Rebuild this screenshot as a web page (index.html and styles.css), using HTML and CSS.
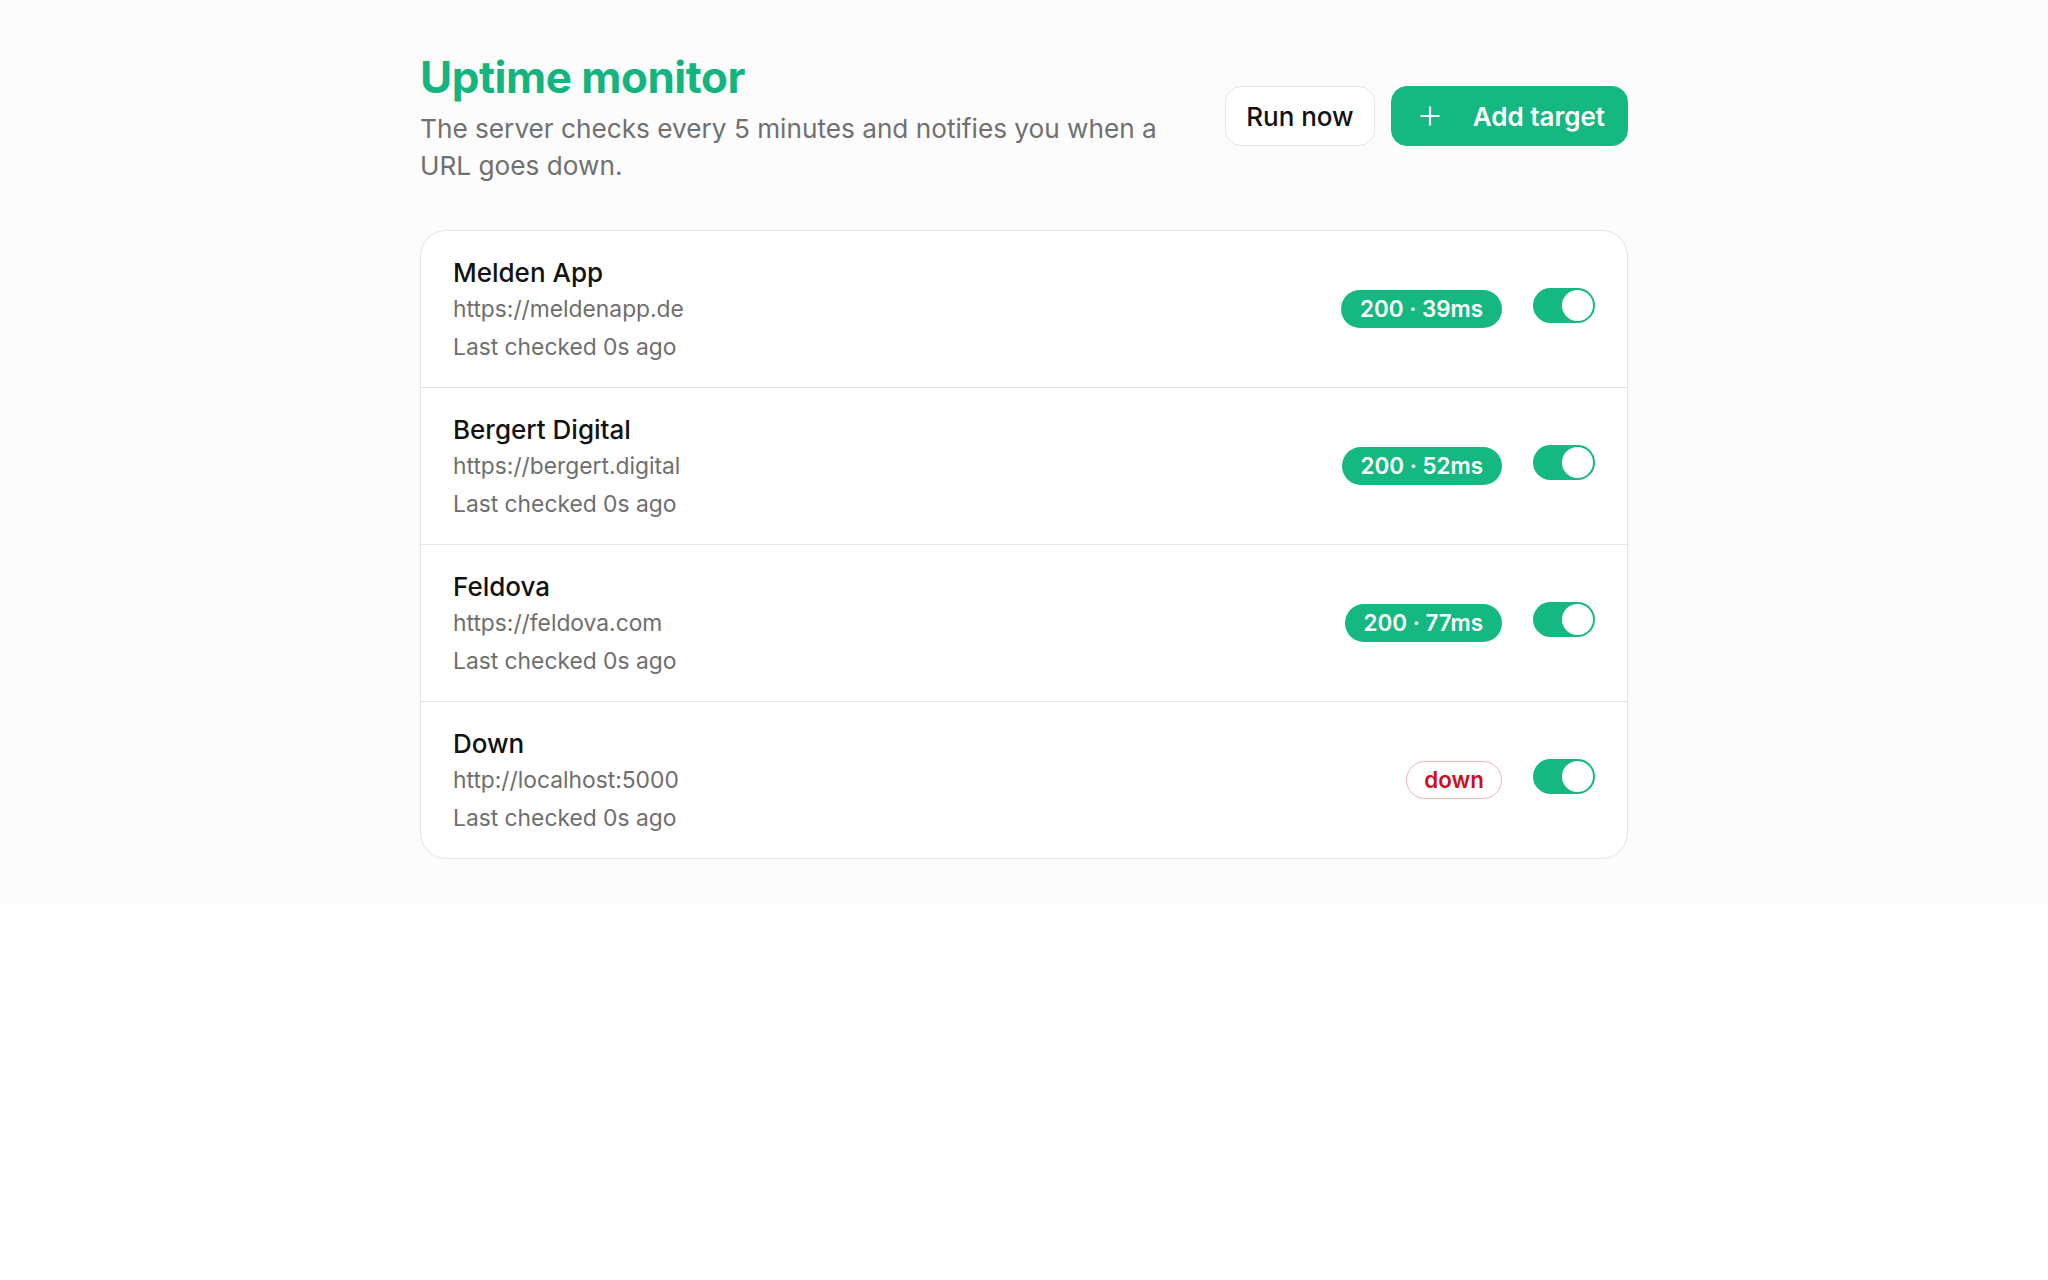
FILE: index.html
```html
<!DOCTYPE html>
<html lang="en">
<head>
<meta charset="utf-8">
<title>Uptime monitor</title>
<link rel="stylesheet" href="styles.css">
</head>
<body>
<div class="page">
  <main class="container">
    <header class="header">
      <div class="intro">
        <h1 class="title">Uptime monitor</h1>
        <p class="subtitle">The server checks every 5 minutes and notifies you when a URL goes down.</p>
      </div>
      <div class="actions">
        <button class="btn btn-secondary" type="button">Run now</button>
        <button class="btn btn-primary" type="button">
          <svg class="btn-icon" viewBox="0 0 24 24" aria-hidden="true"><path d="M12 4v16M4 12h16" fill="none" stroke="currentColor" stroke-width="2" stroke-linecap="round"/></svg>
          <span>Add target</span>
        </button>
      </div>
    </header>

    <ul class="targets">
      <li class="target">
        <div class="target-info">
          <div class="target-name">Melden App</div>
          <div class="target-url">https://meldenapp.de</div>
          <div class="target-meta">Last checked 0s ago</div>
        </div>
        <div class="target-status">
          <span class="badge badge-up">200 · 39ms</span>
          <span class="toggle is-on"><span class="toggle-knob"></span></span>
        </div>
      </li>
      <li class="target">
        <div class="target-info">
          <div class="target-name">Bergert Digital</div>
          <div class="target-url">https://bergert.digital</div>
          <div class="target-meta">Last checked 0s ago</div>
        </div>
        <div class="target-status">
          <span class="badge badge-up">200 · 52ms</span>
          <span class="toggle is-on"><span class="toggle-knob"></span></span>
        </div>
      </li>
      <li class="target">
        <div class="target-info">
          <div class="target-name">Feldova</div>
          <div class="target-url">https://feldova.com</div>
          <div class="target-meta">Last checked 0s ago</div>
        </div>
        <div class="target-status">
          <span class="badge badge-up">200 · 77ms</span>
          <span class="toggle is-on"><span class="toggle-knob"></span></span>
        </div>
      </li>
      <li class="target">
        <div class="target-info">
          <div class="target-name">Down</div>
          <div class="target-url">http://localhost:5000</div>
          <div class="target-meta">Last checked 0s ago</div>
        </div>
        <div class="target-status">
          <span class="badge badge-down">down</span>
          <span class="toggle is-on"><span class="toggle-knob"></span></span>
        </div>
      </li>
    </ul>
  </main>
</div>
</body>
</html>
```

FILE: styles.css
```css
* {
  box-sizing: border-box;
}

html, body {
  margin: 0;
  padding: 0;
  background: #ffffff;
}

body {
  font-family: Inter, "Noto Sans", "Liberation Sans", sans-serif;
  color: #111111;
  -webkit-font-smoothing: antialiased;
}

.page {
  background: #fcfcfc;
  padding: 51px 0 45px;
}

.container {
  width: 1208px;
  margin: 0 auto;
}

.header {
  display: flex;
  align-items: flex-start;
  justify-content: space-between;
  gap: 26px;
  margin-bottom: 46px;
}

.intro {
  flex: 1;
  max-width: 770px;
}

.title {
  margin: 0;
  font-size: 44px;
  line-height: 1.2;
  font-weight: 700;
  letter-spacing: -0.5px;
  color: #14b47e;
}

.subtitle {
  margin: 6px 0 0;
  font-size: 26.2px;
  line-height: 37px;
  color: #707070;
}

.actions {
  display: flex;
  align-items: center;
  gap: 16px;
  flex-shrink: 0;
  margin-top: 35px;
}

.btn {
  display: inline-flex;
  align-items: center;
  height: 60px;
  border-radius: 16px;
  font-family: inherit;
  font-size: 26px;
  font-weight: 500;
  cursor: pointer;
}

.btn-secondary {
  padding: 0 20px;
  background: #ffffff;
  border: 1.5px solid #e3e3e3;
  color: #111111;
}

.btn-primary {
  padding: 0 22px 0 25px;
  gap: 30px;
  background: #14b880;
  border: 1.5px solid #14b880;
  color: #ffffff;
  font-weight: 600;
}

.btn-icon {
  width: 26px;
  height: 26px;
}

.targets {
  list-style: none;
  margin: 0;
  padding: 0;
  background: #ffffff;
  border: 1.6px solid #e4e4e4;
  border-radius: 26px;
  overflow: hidden;
}

.target {
  display: flex;
  align-items: center;
  justify-content: space-between;
  padding: 23px 32px 23px 32px;
}

.target + .target {
  border-top: 1.6px solid #e4e4e4;
}

.target-info {
  display: flex;
  flex-direction: column;
}

.target-name {
  font-size: 26px;
  line-height: 38px;
  font-weight: 500;
  color: #111111;
}

.target-url {
  font-size: 22.8px;
  line-height: 34px;
  color: #6e6e6e;
}

.target-meta {
  margin-top: 4px;
  font-size: 22.8px;
  line-height: 34px;
  color: #6e6e6e;
}

.target-status {
  display: flex;
  align-items: center;
  gap: 31px;
}

.badge {
  display: inline-flex;
  align-items: center;
  height: 38px;
  padding: 0 19px;
  border-radius: 19px;
  font-size: 22.4px;
  font-weight: 600;
}

.badge-up {
  background: #14b880;
  color: #ffffff;
}

.badge-down {
  padding: 0 17px;
  background: #ffffff;
  border: 1.6px solid #f0b6ba;
  color: #cc0f1e;
}

.toggle {
  display: inline-flex;
  align-items: center;
  width: 62px;
  height: 35px;
  padding: 2px;
  border-radius: 18px;
  background: #14b880;
  margin-bottom: 6px;
}

.toggle.is-on {
  justify-content: flex-end;
}

.toggle-knob {
  width: 31px;
  height: 31px;
  border-radius: 50%;
  background: #ffffff;
}
```
